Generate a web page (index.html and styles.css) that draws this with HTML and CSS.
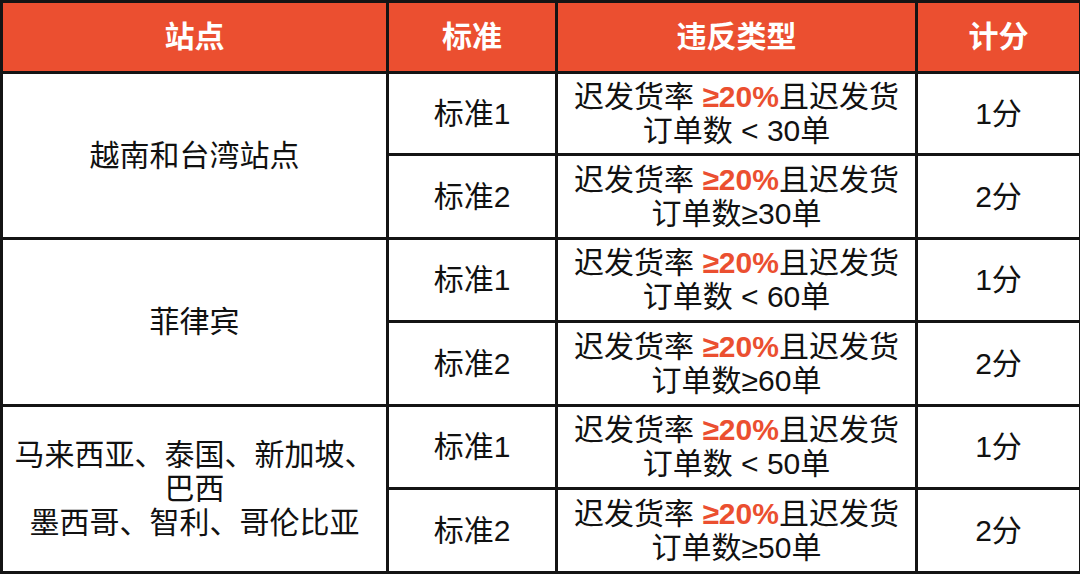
FILE: index.html
```html
<!DOCTYPE html>
<html lang="zh">
<head>
<meta charset="utf-8">
<link rel="stylesheet" href="styles.css">
</head>
<body>
<table class="rules">
  <colgroup>
    <col class="c-site">
    <col class="c-std">
    <col class="c-type">
    <col class="c-score">
  </colgroup>
  <thead>
    <tr class="head-row">
      <th>站点</th>
      <th>标准</th>
      <th>违反类型</th>
      <th>计分</th>
    </tr>
  </thead>
  <tbody>
    <tr>
      <td rowspan="2" class="site">越南和台湾站点</td>
      <td>标准1</td>
      <td class="type">迟发货率 <b class="hl">≥20%</b>且迟发货<br>订单数 &lt; 30单</td>
      <td>1分</td>
    </tr>
    <tr>
      <td>标准2</td>
      <td class="type">迟发货率 <b class="hl">≥20%</b>且迟发货<br>订单数≥30单</td>
      <td>2分</td>
    </tr>
    <tr>
      <td rowspan="2" class="site">菲律宾</td>
      <td>标准1</td>
      <td class="type">迟发货率 <b class="hl">≥20%</b>且迟发货<br>订单数 &lt; 60单</td>
      <td>1分</td>
    </tr>
    <tr>
      <td>标准2</td>
      <td class="type">迟发货率 <b class="hl">≥20%</b>且迟发货<br>订单数≥60单</td>
      <td>2分</td>
    </tr>
    <tr>
      <td rowspan="2" class="site multi">马来西亚、泰国、新加坡、<br>巴西<br>墨西哥、智利、哥伦比亚</td>
      <td>标准1</td>
      <td class="type">迟发货率 <b class="hl">≥20%</b>且迟发货<br>订单数 &lt; 50单</td>
      <td>1分</td>
    </tr>
    <tr>
      <td>标准2</td>
      <td class="type">迟发货率 <b class="hl">≥20%</b>且迟发货<br>订单数≥50单</td>
      <td>2分</td>
    </tr>
  </tbody>
</table>
</body>
</html>
```

FILE: styles.css
```css
html, body {
  margin: 0;
  padding: 0;
  background: #ffffff;
}

body {
  font-family: "Liberation Sans", "Noto Sans CJK SC", sans-serif;
  color: #111111;
}

.rules {
  border-collapse: collapse;
  width: 1079px;
  table-layout: fixed;
}

.c-site { width: 386px; }
.c-std { width: 169px; }
.c-type { width: 360px; }
.c-score { width: 164px; }

.rules th,
.rules td {
  border: 3px solid #141414;
  text-align: center;
  vertical-align: middle;
  padding: 0;
  font-size: 30px;
  line-height: 34px;
}

.head-row {
  height: 71px;
}

.rules th {
  background: #eb4f30;
  color: #ffffff;
  font-weight: bold;
  font-size: 30px;
}

.rules tbody tr {
  height: 83px;
}

.rules tbody tr:nth-child(even) {
  height: 84px;
}

.rules tbody tr:first-child {
  height: 82px;
}

.type {
  line-height: 33px;
}

.multi {
  line-height: 37px;
}

.hl {
  color: #eb4f30;
  font-weight: bold;
}
```
